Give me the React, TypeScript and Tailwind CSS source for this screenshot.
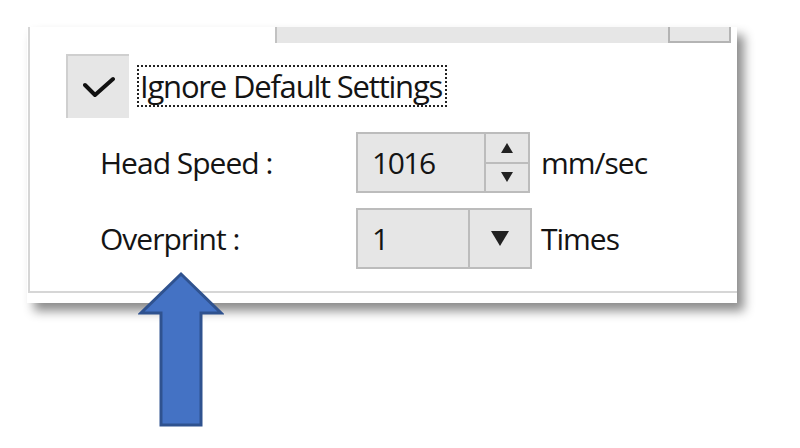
const font = "font-['Open_Sans','Noto_Sans',sans-serif]"

function SpinBox({ value }: { value: string }) {
  return (
    <div className="flex h-[61px] w-[174px] border-2 border-[#bcbcbc] bg-[#e6e6e6]">
      <div className="flex flex-1 items-center pl-[14px] text-[30px] leading-none tracking-[-1.5px] text-[#141414]">
        {value}
      </div>
      <div className="flex w-[44px] flex-col border-l-2 border-[#bcbcbc]">
        <div className="flex flex-1 items-center justify-center border-b-2 border-[#bcbcbc]">
          <svg width="12" height="10" viewBox="0 0 12 10">
            <path d="M6 0 L12 10 L0 10 Z" fill="#222" />
          </svg>
        </div>
        <div className="flex flex-1 items-center justify-center">
          <svg width="12" height="10" viewBox="0 0 12 10">
            <path d="M0 0 L12 0 L6 10 Z" fill="#222" />
          </svg>
        </div>
      </div>
    </div>
  )
}

function ComboBox({ value }: { value: string }) {
  return (
    <div className="flex h-[61px] w-[176px] border-2 border-[#bcbcbc] bg-[#e6e6e6]">
      <div className="flex flex-1 items-center pl-[14px] text-[30px] leading-none text-[#141414]">
        {value}
      </div>
      <div className="flex w-[62px] items-center justify-center border-l-2 border-[#bcbcbc]">
        <svg width="18" height="15" viewBox="0 0 18 15">
          <path d="M0 0 L18 0 L9 15 Z" fill="#222" />
        </svg>
      </div>
    </div>
  )
}

export default function App() {
  return (
    <div className={`relative h-[448px] w-[800px] overflow-hidden bg-white ${font}`}>
      <div className="ml-[27px] mt-[27px] h-[276px] w-[710px] bg-white shadow-[7px_8px_10px_rgba(0,0,0,0.45)]">
        <div className="ml-[1px] flex h-[266px] flex-col border-b-2 border-l-2 border-[#d6d6d6]">
          {/* bottom edge of the control above */}
          <div className="ml-[245px] flex h-[16px] w-[456px] border-l-2 border-[#c2c2c2] bg-[#e6e6e6]">
            <div className="ml-auto w-[63px] border-x-2 border-b-2 border-[#b4b4b4]" />
          </div>

          <div className="ml-[36px] mt-[11px] flex items-center gap-[8px]">
            <div className="flex h-[64px] w-[63px] items-center justify-center border-l-2 border-t-2 border-[#cfcfcf] bg-[#e6e6e6]">
              <svg width="32" height="22" viewBox="0 0 32 22">
                <path d="M2 9 L12 19 L30 3" fill="none" stroke="#111" strokeWidth="4" strokeLinecap="round" strokeLinejoin="round" />
              </svg>
            </div>
            <div className="flex h-[42px] w-[310px] items-center whitespace-nowrap border-2 border-dotted border-[#222] pl-[1px] text-[31px] leading-none tracking-[-1.2px] text-[#141414]">
              Ignore Default Settings
            </div>
          </div>

          <div className="ml-[70px] mt-[14px] flex items-center whitespace-nowrap text-[30px] leading-none tracking-[-1px] text-[#141414]">
            <span className="w-[256px]">Head Speed :</span>
            <SpinBox value="1016" />
            <span className="ml-[11px]">mm/sec</span>
          </div>

          <div className="ml-[70px] mt-[15px] flex items-center whitespace-nowrap text-[30px] leading-none tracking-[-1px] text-[#141414]">
            <span className="w-[256px]">Overprint :</span>
            <ComboBox value="1" />
            <span className="ml-[9px]">Times</span>
          </div>
        </div>
      </div>

      {/* pointer arrow */}
      <svg className="absolute left-[138px] top-[271px]" width="86" height="158" viewBox="138 271 86 158">
        <path
          d="M181 274 L221 313 L201 313 L201 425 L161 425 L161 313 L141 313 Z"
          fill="#4472C4"
          stroke="#2F528F"
          strokeWidth="3"
          strokeLinejoin="miter"
        />
      </svg>
    </div>
  )
}
